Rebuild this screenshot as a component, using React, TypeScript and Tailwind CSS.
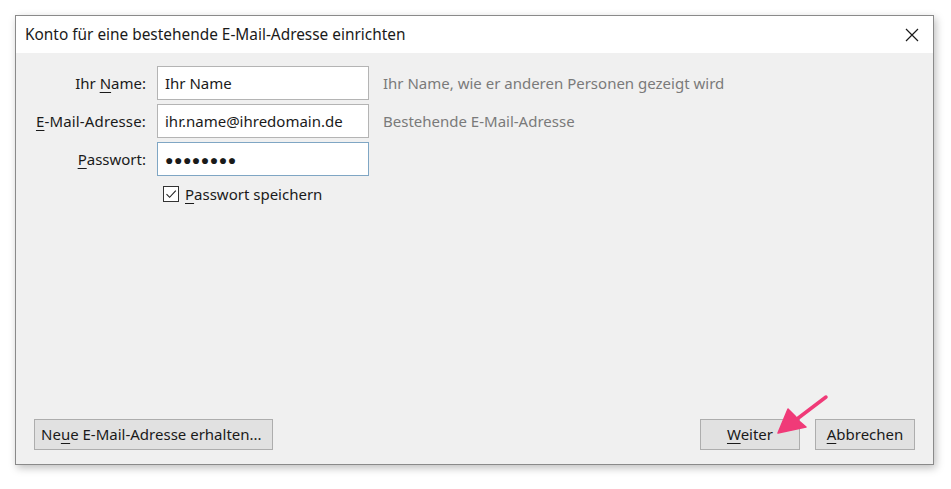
import React from "react";

const font = { fontFamily: '"Noto Sans", "Segoe UI", sans-serif' };

function Acc({ children }: { children: React.ReactNode }) {
  return <span className="underline underline-offset-[3px] decoration-1">{children}</span>;
}

export default function App() {
  return (
    <div className="w-[951px] h-[489px] bg-white pt-[15px] pl-[15px] relative" style={font}>
      <div className="w-[919px] h-[450px] border border-[#8a8a8a] bg-[#f0f0f0] flex flex-col shadow-[2px_3px_8px_rgba(0,0,0,0.25)]">
        <div className="h-[37px] bg-white flex items-center justify-between pl-[9px] pr-[14px] shrink-0">
          <span className="text-[15.4px] text-[#1a1a1a]">Konto für eine bestehende E-Mail-Adresse einrichten</span>
          <svg width="14" height="14" viewBox="0 0 14 14" className="mt-[1px]">
            <path d="M1 1 L13 13 M13 1 L1 13" stroke="#1a1a1a" strokeWidth="1.2" fill="none" />
          </svg>
        </div>
        <div className="flex-1 flex flex-col justify-between pt-[13px] pb-[14px]">
          <div className="grid grid-cols-[130px_212px_auto] gap-x-[11px] gap-y-[4px] items-center text-[15px] text-[#1a1a1a]">
            <div className="text-right">Ihr <Acc>N</Acc>ame:</div>
            <div className="h-[34px] bg-white border border-[#b4b4b4] flex items-center px-[7px]">Ihr Name</div>
            <div className="pl-[3px] text-[#7a7a7a]">Ihr Name, wie er anderen Personen gezeigt wird</div>

            <div className="text-right tracking-[0.15px]"><Acc>E</Acc>-Mail-Adresse:</div>
            <div className="h-[34px] bg-white border border-[#b4b4b4] flex items-center px-[7px]">ihr.name@ihredomain.de</div>
            <div className="pl-[3px] text-[#7a7a7a]">Bestehende E-Mail-Adresse</div>

            <div className="text-right"><Acc>P</Acc>asswort:</div>
            <div className="h-[34px] bg-white border border-[#7fa6c4] flex items-center px-[7px] text-[14px] tracking-[0.5px]">●●●●●●●●</div>
            <div></div>

            <div></div>
            <div className="flex items-center gap-[6px] pl-[6px] mt-[3px]">
              <div className="w-[16px] h-[16px] border border-[#333] bg-white flex items-center justify-center">
                <svg width="12" height="12" viewBox="0 0 12 12">
                  <path d="M1.5 6.2 L4.6 9.3 L10.8 2.6" stroke="#222" strokeWidth="1.1" fill="none" />
                </svg>
              </div>
              <span><Acc>P</Acc>asswort speichern</span>
            </div>
            <div></div>
          </div>
          <div className="flex items-center justify-between px-[18px] text-[15px] text-[#1a1a1a]">
            <button className="h-[31px] px-[6px] w-[239px] text-left bg-[#e1e1e1] border border-[#adadad]">
              Ne<Acc>u</Acc>e E-Mail-Adresse erhalten...
            </button>
            <div className="flex gap-[15px]">
              <button className="h-[31px] w-[100px] bg-[#e1e1e1] border border-[#adadad]">
                <Acc>W</Acc>eiter
              </button>
              <button className="h-[31px] w-[100px] bg-[#e1e1e1] border border-[#adadad]">
                <Acc>A</Acc>bbrechen
              </button>
            </div>
          </div>
        </div>
      </div>
      <svg className="absolute left-0 top-0 pointer-events-none" width="951" height="489" viewBox="0 0 951 489">
        <path d="M826 397 L797 419" stroke="#f03a78" strokeWidth="3.5" strokeLinecap="round" fill="none" />
        <path d="M778 433 L788 409 L795 416 L799 421 L806 427 Z" fill="#f03a78" stroke="#f03a78" strokeWidth="1.5" strokeLinejoin="round" />
      </svg>
    </div>
  );
}
